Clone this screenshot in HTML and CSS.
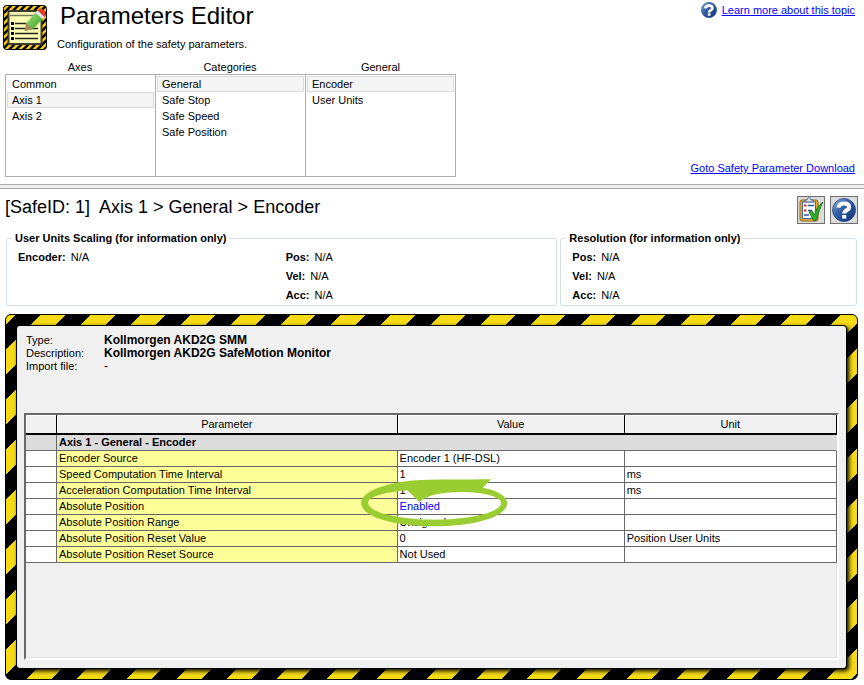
FILE: index.html
```
<!DOCTYPE html>
<html lang="en">
<head>
  <meta charset="utf-8">
  <title>Parameters Editor</title>
  <link rel="stylesheet" href="styles.css">
</head>
<body>
  <svg class="defs" width="0" height="0" aria-hidden="true">
    <defs>
      <linearGradient id="blue" x1="0" y1="0" x2="1" y2="1">
        <stop offset="0" stop-color="#9db8dc"/>
        <stop offset="0.4" stop-color="#3561a8"/>
        <stop offset="1" stop-color="#0d3272"/>
      </linearGradient>
      <linearGradient id="green" x1="0" y1="0" x2="1" y2="1">
        <stop offset="0" stop-color="#a9ea86"/>
        <stop offset="1" stop-color="#2c9a1c"/>
      </linearGradient>
      <pattern id="hazard" width="7" height="7" patternUnits="userSpaceOnUse">
        <rect width="7" height="7" fill="#000"/>
        <path d="M0 3.5L3.5 0H7L0 7ZM7 3.5V7H3.5Z" fill="#f8cc18"/>
      </pattern>
      <symbol id="help" viewBox="0 0 24 24">
        <circle cx="12" cy="12" r="11.5" fill="url(#blue)" stroke="#24498a" stroke-width="0.8"/>
        <path d="M6.500 9.6C6.8 6.4 9 5.4 12 5.4C15.200 5.4 17.200 6.800 17.200 9.2C17.200 12.200 12.200 12 12.200 15.6" fill="none" stroke="#fff" stroke-width="4"/>
        <rect x="10.2" y="17" width="4" height="3.600" fill="#fff"/>
      </symbol>
    </defs>
  </svg>

  <header class="top">
    <div class="brand">
      <svg class="logo" viewBox="0 0 44 45">
        <rect x="0.5" y="0.5" width="43" height="44" rx="3" fill="url(#hazard)" stroke="#000"/>
        <rect x="5.5" y="6" width="33" height="33" fill="#ffffb4" stroke="#3c3c30" stroke-width="2"/>
        <path d="M7 10.500H37" stroke="#77775a" stroke-width="1.500"/>
        <path d="M8 18.500H11M8 23.500H11M8 28.500H11M8 33.500H11" stroke="#000" stroke-width="3"/>
        <path d="M12 18.500H25M12 23.500H35M12 28.500H35M12 33.500H35" stroke="#222" stroke-width="1.500"/>
        <path d="M23 18.500L34 6L41 12.500L30 24L22 26Z" fill="url(#green)"/>
        <path d="M23 18.500L22 26L29.500 24L26 20.500Z" fill="#a98752"/>
        <path d="M34 6L36 4C39 2 44 6.500 42.500 10.500L41 12.500Z" fill="#d8412c"/>
        <path d="M32.500 7.700L34.500 5.500L41.500 12L39.500 14Z" fill="#e8e8f0"/>
      </svg>
      <div>
        <h1>Parameters Editor</h1>
        <p>Configuration of the safety parameters.</p>
      </div>
    </div>
    <div class="links">
      <a class="learn" href="#"><svg width="16" height="16"><use href="#help"/></svg><span>Learn more about this topic</span></a>
      <a href="#">Goto Safety Parameter Download</a>
    </div>
    <div class="pickers">
      <div class="picker">
        <h3>Axes</h3>
        <ul>
          <li><button type="button">Common</button></li>
          <li><button type="button" class="selected">Axis 1</button></li>
          <li><button type="button">Axis 2</button></li>
        </ul>
      </div>
      <div class="picker">
        <h3>Categories</h3>
        <ul>
          <li><button type="button" class="selected">General</button></li>
          <li><button type="button">Safe Stop</button></li>
          <li><button type="button">Safe Speed</button></li>
          <li><button type="button">Safe Position</button></li>
        </ul>
      </div>
      <div class="picker">
        <h3>General</h3>
        <ul>
          <li><button type="button" class="selected">Encoder</button></li>
          <li><button type="button">User Units</button></li>
        </ul>
      </div>
    </div>
  </header>

  <div class="splitter"></div>

  <main>
    <div class="heading">
      <h2>[SafeID: 1]&nbsp; Axis 1 &gt; General &gt; Encoder</h2>
      <div class="tools">
        <button type="button" aria-label="Validate">
          <svg viewBox="0 0 26 26">
            <rect x="2" y="3" width="18" height="21" rx="2" fill="#e9ac2c" stroke="#9a6410"/>
            <rect x="4.500" y="5" width="13" height="16.500" fill="#fff" stroke="#3c62a8"/>
            <path d="M7 5V3H9C9 0 13 0 13 3H15V5Z" fill="#dde3ee" stroke="#55698f"/>
            <path d="M6 8.500H8.500M6 13.500H8.500" stroke="#d02818" stroke-width="2"/>
            <path d="M10 8.500H16M10 13.500H14M6 18H11" stroke="#2b55a6" stroke-width="1.500"/>
            <path d="M11 15L14 13.500L16.500 18C18 12 20.500 8 25 5C22 11 20.500 16 18 23.500H15.500Z" fill="#2fae28" stroke="#14701a" stroke-width="0.800"/>
          </svg>
        </button>
        <button type="button" aria-label="Help"><svg viewBox="0 0 26 26"><use href="#help" x="1" y="1" width="24" height="24"/></svg></button>
      </div>
    </div>

    <div class="info">
      <fieldset class="scaling">
        <legend>User Units Scaling (for information only)</legend>
        <div>
          <p><b>Encoder:</b> N/A</p>
        </div>
        <div>
          <p><b>Pos:</b> N/A</p>
          <p><b>Vel:</b> N/A</p>
          <p><b>Acc:</b> N/A</p>
        </div>
      </fieldset>
      <fieldset>
        <legend>Resolution (for information only)</legend>
        <div>
          <p><b>Pos:</b> N/A</p>
          <p><b>Vel:</b> N/A</p>
          <p><b>Acc:</b> N/A</p>
        </div>
      </fieldset>
    </div>

    <section class="hazard">
      <div class="panel">
        <dl>
          <dt>Type:</dt><dd><b>Kollmorgen AKD2G SMM</b></dd>
          <dt>Description:</dt><dd><b>Kollmorgen AKD2G SafeMotion Monitor</b></dd>
          <dt>Import file:</dt><dd>-</dd>
        </dl>
        <div class="grid">
          <table>
            <colgroup>
              <col class="col-mark"><col class="col-name"><col class="col-value"><col>
            </colgroup>
            <thead>
              <tr><th></th><th>Parameter</th><th>Value</th><th>Unit</th></tr>
            </thead>
            <tbody>
              <tr class="group"><td></td><td colspan="3">Axis 1 - General - Encoder</td></tr>
              <tr><td></td><td class="name">Encoder Source</td><td>Encoder 1 (HF-DSL)</td><td></td></tr>
              <tr><td></td><td class="name">Speed Computation Time Interval</td><td>1</td><td>ms</td></tr>
              <tr><td></td><td class="name">Acceleration Computation Time Interval</td><td>1</td><td>ms</td></tr>
              <tr>
                <td></td>
                <td class="name">Absolute Position</td>
                <td class="marked">Enabled
                  <svg class="circle" viewBox="30 26 440 144">
                    <path fill="#9acd32" fill-rule="evenodd" d="M420 27L395 52C440 60 468 78 468 98C468 140 370 168 250 168C130 168 30 140 30 98C30 60 120 33 210 29C280 26 350 28 420 27ZM168 60C100 66 51 79 51 98C51 125 140 148 250 148C360 148 450 125 450 98C450 80 400 65 330 65C270 65 225 76 205 95Z"/>
                  </svg>
                </td>
                <td></td>
              </tr>
              <tr><td></td><td class="name">Absolute Position Range</td><td>Unsigned</td><td></td></tr>
              <tr><td></td><td class="name">Absolute Position Reset Value</td><td>0</td><td>Position User Units</td></tr>
              <tr><td></td><td class="name">Absolute Position Reset Source</td><td>Not Used</td><td></td></tr>
            </tbody>
          </table>
        </div>
      </div>
    </section>
  </main>
</body>
</html>
```
FILE: styles.css
```
* {
  box-sizing: border-box;
}

body {
  margin: 0;
  min-height: 100vh;
  display: flex;
  flex-direction: column;
  background: #fff;
  color: #000;
  font-family: "Liberation Sans", Arial, sans-serif;
  font-size: 11px;
  line-height: 16px;
}

h1, h2, h3, p, ul, dl, dd {
  margin: 0;
  padding: 0;
}

ul {
  list-style: none;
}

button {
  font: inherit;
  color: inherit;
}

a {
  color: #0000ff;
}

.defs {
  position: absolute;
}

.top {
  display: grid;
  grid-template-columns: 1fr auto;
  padding: 2px 9px 7px 3px;
}

.brand {
  display: flex;
  gap: 10px;
  height: 58px;
}

.logo {
  width: 44px;
  height: 45px;
  margin-top: 3px;
}

h1 {
  padding-left: 3px;
  font-size: 24px;
  font-weight: normal;
  line-height: 28px;
}

.brand p {
  margin-top: 6px;
}

.links {
  grid-column: 2;
  grid-row: 1 / 3;
  display: flex;
  flex-direction: column;
  justify-content: space-between;
  align-items: flex-end;
  padding-bottom: 1px;
}

.learn {
  display: flex;
  gap: 5px;
  text-decoration: none;
}

.learn span {
  text-decoration: underline;
}

.pickers {
  display: flex;
  padding-left: 2px;
}

.picker {
  width: 150px;
}

.picker:last-child {
  width: 151px;
}

.picker h3 {
  font-size: 11px;
  font-weight: normal;
  line-height: 14px;
  text-align: center;
}

.picker ul {
  height: 103px;
  padding: 1px;
  border: 1px solid #abadb3;
}

.picker:not(:last-child) ul {
  border-right: 0;
}

.picker button {
  display: block;
  width: 100%;
  height: 16px;
  padding: 0 4px;
  border: 1px solid transparent;
  background: none;
  line-height: 14px;
  text-align: left;
}

.picker .selected {
  border-color: #dadada;
  background: #f5f5f5;
}

.splitter {
  height: 5px;
  border: solid #a9a9a9;
  border-width: 1px 0;
  background: #f0f0f0;
}

main {
  flex: 1;
  display: flex;
  flex-direction: column;
  padding: 7px 6px 5px 5px;
}

.heading {
  display: flex;
  justify-content: space-between;
}

h2 {
  font-size: 18px;
  font-weight: normal;
  line-height: 22px;
}

.tools {
  display: flex;
  gap: 5px;
}

.tools button {
  width: 28px;
  height: 28px;
  padding: 0;
  border: 1px solid #707070;
  background: #dcdcdc;
}

.tools svg {
  display: block;
  width: 26px;
  height: 26px;
}

.info {
  display: grid;
  grid-template-columns: 552fr 297fr;
  gap: 3px;
  padding: 6px 1px 8px;
}

fieldset {
  display: grid;
  min-width: 0;
  margin: 0;
  padding: 2px 11px 0;
  border: 1px solid #d5dfe5;
  border-radius: 3px;
}

.scaling {
  grid-template-columns: 268fr 260fr;
}

legend {
  margin-left: -6px;
  padding: 0 3px;
  font-weight: bold;
}

fieldset p {
  height: 19px;
  line-height: 19px;
}

fieldset b {
  margin-right: 2px;
}

.hazard {
  flex: 1;
  display: flex;
  padding: 11px;
  border: 1px solid #000;
  border-radius: 6px;
  background: linear-gradient(135deg, #f5da14 12%, #000 12% 37%, #f5da14 37% 62%, #000 62% 87%, #f5da14 87%) border-box;
  background-size: 50px 50px;
}

.panel {
  flex: 1;
  display: flex;
  flex-direction: column;
  padding: 8px 7px;
  border-radius: 3px;
  background: #f0f0f0;
  box-shadow: 0 0 0 1px #000, 2px 2px 4px 1px #000;
}

.panel dl {
  display: grid;
  grid-template-columns: 78px 1fr;
  margin-bottom: 40px;
  padding-left: 2px;
  line-height: 13px;
}

.panel dd {
  font-size: 12px;
}

.grid {
  flex: 1;
  border: 2px solid;
  border-color: #696969 #fff #fff #696969;
  box-shadow: inset -1px -1px 0 #e3e3e3;
}

table {
  width: 100%;
  table-layout: fixed;
  border-collapse: separate;
  border-spacing: 0;
}

.col-mark {
  width: 31px;
}

.col-name {
  width: 42%;
}

.col-value {
  width: 28%;
}

th {
  height: 20px;
  padding: 0;
  border: solid #000;
  border-width: 0 1px 2px 0;
  box-shadow: inset 1px 1px 0 #fff;
  font-weight: normal;
  line-height: 18px;
}

td {
  height: 16px;
  padding: 0 2px;
  border: solid #696969;
  border-width: 0 1px 1px 0;
  background: #fff;
  line-height: 15px;
  white-space: nowrap;
}

.group td {
  border-right-color: #dcdcdc;
  background: #dcdcdc;
  font-weight: bold;
}

.group td:first-child {
  border-right-color: #696969;
}

.name {
  background: #ffff99;
}

.marked {
  position: relative;
  color: #0000ff;
}

/* hand-drawn ring around the value */
.circle {
  position: absolute;
  left: -37px;
  top: -20px;
  width: 147px;
  height: 48px;
}
```
